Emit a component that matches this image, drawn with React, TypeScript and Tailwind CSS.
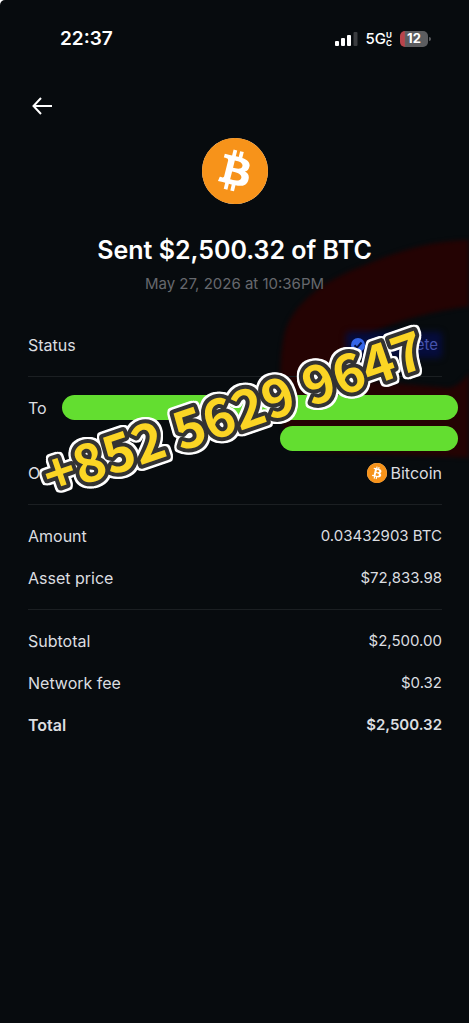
import { ReactNode } from 'react'
import { SiBitcoin } from 'react-icons/si'

type RowProps = {
  label: string
  bold?: boolean
  children: ReactNode
}

function Coin({ className }: { className: string }) {
  return (
    <span className={`inline-flex rounded-full bg-white text-[#f7931a] ${className}`}>
      <SiBitcoin className="h-full w-full" />
    </span>
  )
}

function Section({ children, last }: { children: ReactNode; last?: boolean }) {
  return (
    <dl className={last ? 'py-[10px]' : 'border-b border-[#1b1f22] py-[10px]'}>
      {children}
    </dl>
  )
}

function Row({ label, bold, children }: RowProps) {
  return (
    <div className={`flex h-[42px] items-center justify-between ${bold ? 'font-semibold' : ''}`}>
      <dt>{label}</dt>
      <dd className="flex items-center text-[15px]">{children}</dd>
    </div>
  )
}

function StatusBar() {
  return (
    <div className="flex items-center justify-between pt-[25px] pr-[38px] pl-[60px] text-white">
      <span className="text-[19px] leading-7 font-semibold">22:37</span>
      <div className="flex items-center">
        <svg className="h-[14px] w-[23px]" viewBox="0 0 23 14">
          <rect x="0" y="9" width="4" height="5" rx="1" fill="#fff" />
          <rect x="6" y="6" width="4" height="8" rx="1" fill="#fff" />
          <rect x="12" y="3" width="4" height="11" rx="1" fill="#fff" />
          <rect x="18.500" y="0" width="4" height="14" rx="1" fill="#3a3c3f" />
        </svg>
        <span className="ml-2 text-[15px] leading-5 font-medium">5G</span>
        <span className="flex flex-col text-[8px] leading-[8px] font-bold">
          <span>U</span>
          <span>C</span>
        </span>
        <span className="ml-2 flex h-4 w-7 items-center justify-center rounded-[5px] bg-linear-to-r from-[#b8434b] from-15% to-[#5c5d60] to-20% text-[13px] font-bold">
          12
        </span>
        <span className="ml-px h-1 w-0.5 rounded-r bg-[#5c5d60]" />
      </div>
    </div>
  )
}

export default function App() {
  return (
    <main className="relative min-h-screen overflow-hidden rounded-tl-[5px] bg-[#070b0e] font-['Inter','Liberation_Sans',sans-serif] text-base text-[#dcdee0]">
      {/* marker stroke behind the status row */}
      <svg
        className="absolute top-[230px] right-0 h-[240px] w-[200px] blur-[2px]"
        viewBox="0 0 200 240"
        aria-hidden="true"
      >
        <path
          fill="#240303"
          d="M204 10 C170 9 130 20 96 35 C55 50 22 74 15 106 C9 135 12 165 14 195 C14 215 30 222 60 222 L204 228 Z M204 76 C170 79 130 90 104 102 C84 112 78 130 80 150 L180 158 C190 156 195 150 204 138 Z"
          fillRule="evenodd"
        />
      </svg>

      <div className="relative">
        <StatusBar />

        <header className="px-[30px] pt-[41px]">
          <button type="button" aria-label="Back" className="flex h-6 w-6 items-center justify-center text-white">
            <svg className="h-6 w-6" viewBox="0 0 24 24" fill="none" stroke="currentColor" strokeWidth="2">
              <path d="M22 12H3.500M11 4L3.500 12L11 20" />
            </svg>
          </button>
        </header>

        <section className="flex flex-col items-center pt-5">
          <Coin className="h-[66px] w-[66px]" />
          <h1 className="mt-[30px] text-[25px] leading-8 font-semibold text-white">
            Sent $2,500.32 of BTC
          </h1>
          <p className="mt-2 text-[15px] leading-5 text-[#66686d]">May 27, 2026 at 10:36PM</p>
        </section>

        <div className="pt-5 pr-[27px] pl-7">
          <Section>
            <Row label="Status">
              <span className="relative mr-1 flex items-center gap-1 text-[#4553ad]">
                <span className="absolute -inset-x-1 -inset-y-0.5 rounded bg-[#050c3c] blur-[3px]" />
                <svg className="relative h-4 w-4" viewBox="0 0 16 16">
                  <circle cx="8" cy="8" r="7" fill="#3566e8" />
                  <path d="M4.500 8.200L7 10.600L11.500 5.500" fill="none" stroke="#071140" strokeWidth="2" />
                </svg>
                <span className="relative">Complete</span>
              </span>
            </Row>
          </Section>

          <Section>
            <div className="flex h-[65px] justify-between">
              <dt className="w-[34px] leading-[42px]">To</dt>
              <dd className="-mr-4 flex flex-1 flex-col items-end gap-[6px] pt-2">
                <span className="h-[25px] w-full rounded-full bg-[#63de30]" />
                <span className="h-[25px] w-[45%] rounded-full bg-[#63de30]" />
              </dd>
            </div>
            <Row label="On">
              <Coin className="mr-1 h-5 w-5" />
              <span className="text-base">Bitcoin</span>
            </Row>
          </Section>

          <Section>
            <Row label="Amount">0.03432903 BTC</Row>
            <Row label="Asset price">$72,833.98</Row>
          </Section>

          <Section last>
            <Row label="Subtotal">$2,500.00</Row>
            <Row label="Network fee">$0.32</Row>
            <Row label="Total" bold>$2,500.32</Row>
          </Section>
        </div>
      </div>

      {/* phone number sticker */}
      <div className="pointer-events-none absolute inset-x-0 top-[314px] flex justify-center">
        <svg
          className="h-[200px] w-full overflow-visible [filter:drop-shadow(2px_0_0_#fff)_drop-shadow(-2px_0_0_#fff)_drop-shadow(0_2px_0_#fff)_drop-shadow(0_-2px_0_#fff)]"
          viewBox="0 0 469 200"
        >
          <text
            x="234"
            y="118"
            textAnchor="middle"
            transform="rotate(-19 234 100)"
            fill="#fbd524"
            stroke="#333333"
            strokeWidth="8"
            strokeLinejoin="round"
            className="font-['Noto_Sans_CJK_SC',sans-serif] text-[53px] font-bold [paint-order:stroke_fill]"
          >
            +852 5629 9647
          </text>
        </svg>
      </div>
    </main>
  )
}
